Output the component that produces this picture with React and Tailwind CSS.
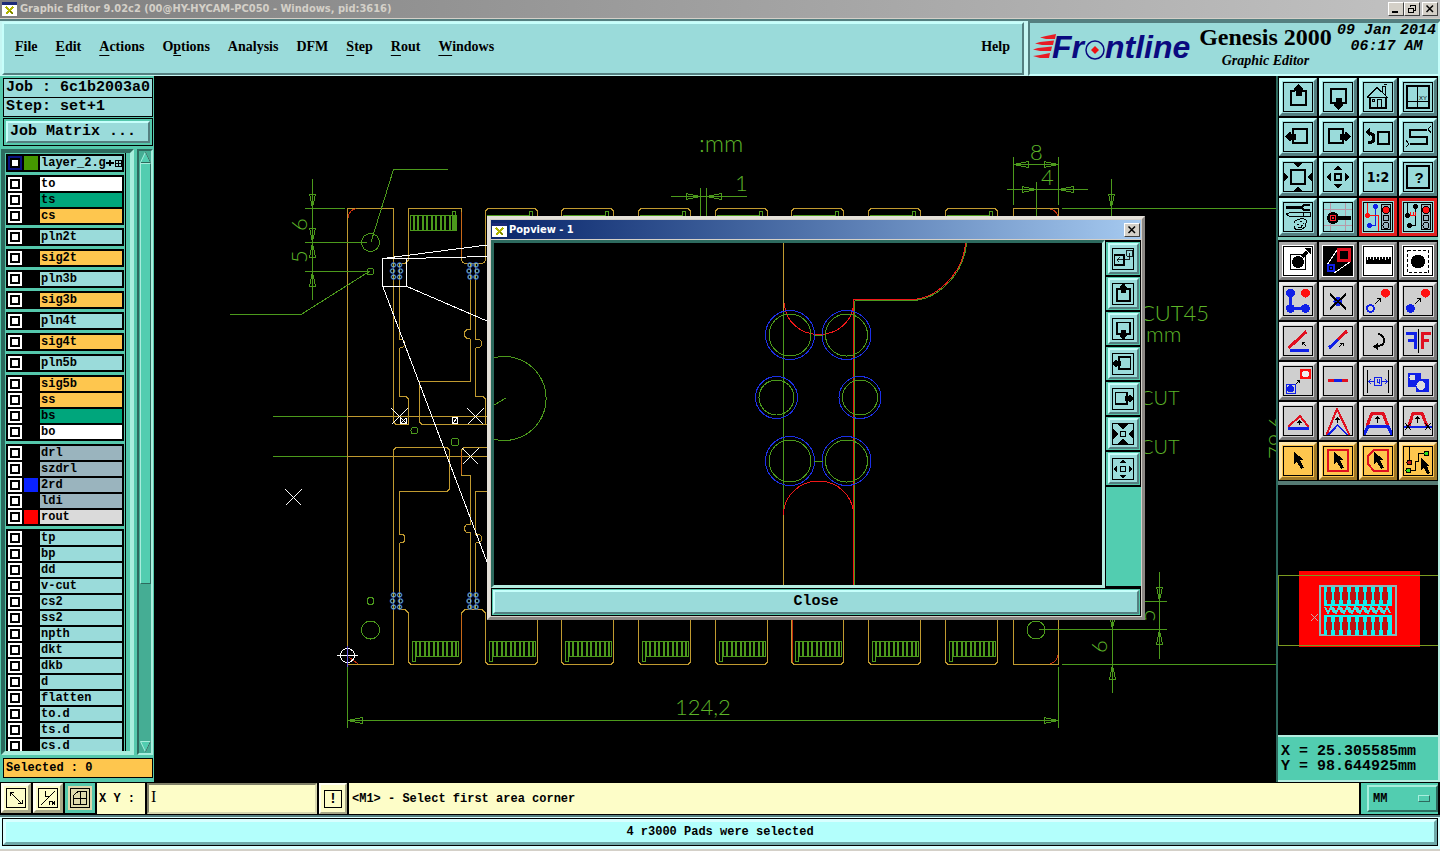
import { useState } from 'react';

const RAISED = 'border-t-[#c6fffb] border-l-[#c6fffb] border-r-[#547f80] border-b-[#547f80]';
const TEAL_RAISED = 'border-t-[#a8eedd] border-l-[#a8eedd] border-r-[#2d6a5e] border-b-[#2d6a5e]';
const MONO = "font-['Liberation_Mono',monospace] font-bold";
const TITLE = "font-['DejaVu_Sans_Condensed','DejaVu_Sans',sans-serif] font-bold";

const GREEN = '#4c9a1c';
const GOLD = '#c09a30';

/* ---------- data ---------- */

const MENUS = [
  ['', 'F', 'ile'],
  ['', 'E', 'dit'],
  ['', 'A', 'ctions'],
  ['O', 'p', 'tions'],
  ['Analysis', '', ''],
  ['DFM', '', ''],
  ['', 'S', 'tep'],
  ['', 'R', 'out'],
  ['', 'W', 'indows'],
];

const BLUE_ROW = 'bg-[#9adbda]';
const WHITE_ROW = 'bg-white';
const GREEN_ROW = 'bg-[#00a67c]';
const ORANGE_ROW = 'bg-[#fec64e]';
const SLATE_ROW = 'bg-[#9ab4be]';

const LAYER_GROUPS = [
  [['layer_2.g', BLUE_ROW, 'bg-[#459800]']],
  [['to', WHITE_ROW], ['ts', GREEN_ROW], ['cs', ORANGE_ROW]],
  [['pln2t', BLUE_ROW]],
  [['sig2t', ORANGE_ROW]],
  [['pln3b', BLUE_ROW]],
  [['sig3b', ORANGE_ROW]],
  [['pln4t', BLUE_ROW]],
  [['sig4t', ORANGE_ROW]],
  [['pln5b', BLUE_ROW]],
  [['sig5b', ORANGE_ROW], ['ss', ORANGE_ROW], ['bs', GREEN_ROW], ['bo', WHITE_ROW]],
  [
    ['drl', SLATE_ROW],
    ['szdrl', SLATE_ROW],
    ['2rd', SLATE_ROW, 'bg-[#0a22ff]'],
    ['ldi', SLATE_ROW],
    ['rout', 'bg-[#dadada]', 'bg-[#ff0000]'],
  ],
  ['tp', 'bp', 'dd', 'v-cut', 'cs2', 'ss2', 'npth', 'dkt', 'dkb', 'd', 'flatten', 'to.d', 'ts.d', 'cs.d'].map((n) => [n, BLUE_ROW]),
];

/* ---------- icons (32 x 32 grid) ---------- */

const thin = { fill: 'none', stroke: '#000', strokeWidth: 1 };
const thick = { fill: 'none', stroke: '#000', strokeWidth: 2 };
const red = { fill: 'none', stroke: '#e01020', strokeWidth: 2 };
const blue = { fill: 'none', stroke: '#1020e8', strokeWidth: 2 };

const CURSOR = 'M12 7 L12 19 L15 17 L19 24 L21.500 22.500 L18 15.500 L21.500 14.500 Z';

const ICONS = {
  panUp: (
    <>
      <path d="M13 10 H9 V24 H24 V10 H20" {...thick} />
      <path d="M16.500 3 L21 8 V10 H19.500 V15 H13.500 V10 H12 V8 Z" />
    </>
  ),
  panDown: (
    <>
      <rect x="9" y="8" width="15" height="14" {...thick} />
      <path d="M16.500 29 L21 24 V22.500 H19.500 V17 H13.500 V22.500 H12 V24 Z" />
    </>
  ),
  panLeft: (
    <>
      <rect x="11" y="8" width="14" height="14" {...thick} />
      <path d="M3 15.500 L7.500 11 H9 V12.500 H14 V18.500 H9 V20 H7.500 Z" />
    </>
  ),
  panRight: (
    <>
      <rect x="7" y="8" width="14" height="14" {...thick} />
      <path d="M29 15.500 L24.500 11 H23 V12.500 H18 V18.500 H23 V20 H24.500 Z" />
    </>
  ),
  home: (
    <>
      <path d="M5 16.500 L15 6.500 L25.500 16.500 H5" {...thin} />
      <path d="M8 17 V27 H23.500 V17" {...thick} />
      <rect x="15.500" y="18.500" width="4" height="8" {...thin} />
      <rect x="10.500" y="18.500" width="2" height="2" {...thin} />
      <path d="M20.500 11 V5.500 H23.500 V14 M22 4 q1 -1 3 -1" {...thin} />
    </>
  ),
  grid: (
    <>
      <rect x="5" y="5" width="22" height="22" {...thick} />
      <path d="M15.500 5 V27 M5 20.500 H27" {...thin} />
      <text x="17" y="19" fontSize="6" fontFamily="Liberation Sans, sans-serif">XY</text>
    </>
  ),
  undo: (
    <>
      <rect x="16" y="11" width="11" height="12" {...thick} />
      <path d="M6 12 Q12 12 12 17 Q12 22 6 22" fill="none" stroke="#000" strokeWidth="3" />
      <path d="M3 11 L8 6 V16 Z" />
    </>
  ),
  serpentine: (
    <>
      <path d="M25 9 H8 V15.500 H25 V23 H8" {...thick} />
      <path d="M29 5 L26 8 L29 12 M4 19 L7 23 L4 26" {...thin} />
    </>
  ),
  zoomIn: (
    <>
      <rect x="9" y="9" width="14" height="14" {...thick} />
      <path d="M11 2 H21 L16 6 Z M11 30 H21 L16 26 Z M2 11 V21 L6.500 16 Z M30 11 V21 L25.500 16 Z" />
    </>
  ),
  zoomOut: (
    <>
      <rect x="13" y="13" width="6" height="6" {...thick} />
      <path d="M11 9 H21 L16 5 Z M11 23 H21 L16 27 Z M9 11 V21 L4.500 16 Z M23 11 V21 L27.500 16 Z" />
    </>
  ),
  squeeze: (
    <>
      <rect x="13" y="13" width="6" height="6" {...thick} />
      <path d="M9 3 H23 L16 11 Z M9 29 H23 L16 21 Z M3 9 V23 L10 16 Z M29 9 V23 L22 16 Z" />
    </>
  ),
  ratio: (
    <text x="16" y="21" textAnchor="middle" fontSize="14" fontWeight="700" fontFamily="DejaVu Sans Condensed, sans-serif">1:2</text>
  ),
  help: (
    <>
      <rect x="5" y="5" width="22" height="22" {...thick} />
      <text x="17" y="22" textAnchor="middle" fontSize="15" fontWeight="700" fontFamily="Liberation Sans, sans-serif">?</text>
    </>
  ),
  tools: (
    <>
      <path d="M4 6.500 H20" stroke="#000" strokeWidth="3" />
      <path d="M28 4 H22 L19 6.500 L22 9 H28" {...thick} />
      <path d="M4 13 L8 11.500 H28 V15.500 H8 Z M21 11.500 V15.500" {...thin} />
      <path d="M12 25 Q11 19 18 18 Q24 17 25 21 Q23 22 24 25 Q20 29 15 29 Q12 28 12 25 Z M15 23 h2 M18 20.500 h2 M21 22 h1 M16 26 h3 v-2 h2" {...thin} />
    </>
  ),
  probe: (
    <>
      <path d="M2 8.500 H30 M2 24.500 H30 M8.500 2 V30 M23.500 2 V30" stroke="#b79aa8" />
      <circle cx="11" cy="17" r="6" />
      <path d="M15 17 H29" stroke="#000" strokeWidth="4" />
      <rect x="8.500" y="14.500" width="5" height="5" fill="none" stroke="#ff2030" />
      <rect x="10.500" y="16.500" width="1" height="1" fill="none" stroke="#ff2030" />
    </>
  ),
  netOn: (
    <>
      <path d="M13.500 5 V24.500 H8" stroke="#1020e8" fill="none" />
      <path d="M5.500 2 V14.500 H16.500 V30" stroke="#ff1010" fill="none" />
      <circle cx="13.500" cy="5.500" r="2.500" fill="#1020e8" />
      <circle cx="7.500" cy="24.500" r="2.500" fill="#1020e8" />
      <circle cx="5.500" cy="14.500" r="2.500" fill="#ff1010" />
      <rect x="19.500" y="3.500" width="9" height="25" fill="#9ab4be" stroke="#000" />
      <circle cx="24" cy="9" r="3.500" fill="#ff1010" stroke="#000" />
      <circle cx="24" cy="17" r="3" {...thin} />
      <circle cx="24" cy="24.500" r="3" {...thin} />
    </>
  ),
  netOff: (
    <>
      <path d="M13.500 5 V24.500 H8 M5.500 2 V14.500" {...thin} />
      <circle cx="13.500" cy="5.500" r="2.500" />
      <circle cx="7.500" cy="24.500" r="2.500" />
      <circle cx="5.500" cy="14.500" r="2.500" />
      <path d="M8 14.500 H14 M8.500 11 V14 M11.500 11 V14 M13.500 11 V14" stroke="#ff1010" fill="none" />
      <rect x="19.500" y="3.500" width="9" height="25" fill="#9ab4be" stroke="#000" />
      <circle cx="24" cy="9" r="3.500" fill="#ff1010" stroke="#000" />
      <circle cx="24" cy="17" r="3" {...thin} />
      <circle cx="24" cy="24.500" r="3" {...thin} />
    </>
  ),
  selectPad: (
    <>
      <rect x="8.500" y="9.500" width="15" height="15" {...thin} />
      <circle cx="16" cy="17" r="6" />
      <path d="M20 12 L25 7" stroke="#000" strokeWidth="3" />
      <path d="M22 3 H29 V10 Z" />
    </>
  ),
  selectPair: (
    <>
      <rect x="2" y="2" width="28" height="28" />
      <path d="M5 20 L15 5 M12 28 L28 17" stroke="#fff" />
      <rect x="16" y="4" width="11" height="11" {...red} strokeWidth="3" />
      <rect x="6" y="20" width="6" height="6" {...blue} />
      <rect x="8" y="22" width="2" height="2" fill="#1020e8" />
    </>
  ),
  ruler: (
    <>
      <rect x="4" y="12" width="25" height="7" />
      <path d="M5.500 11 V15 M8.500 11 V14 M11.500 11 V15 M14.500 11 V14 M17.500 11 V15 M20.500 11 V14 M23.500 11 V15 M26.500 11 V14" stroke="#fff" />
    </>
  ),
  region: (
    <>
      <rect x="5.500" y="5.500" width="21" height="22" {...thin} strokeDasharray="3 2" />
      <circle cx="16" cy="16.500" r="7" />
    </>
  ),
  net: (
    <>
      <path d="M8.500 8 V23.500 H23.500" fill="none" stroke="#1020e8" strokeWidth="3" />
      <circle cx="8.500" cy="8" r="4.500" fill="#1020e8" />
      <circle cx="8.500" cy="23.500" r="4.500" fill="#1020e8" />
      <circle cx="23.500" cy="23.500" r="4.500" fill="#1020e8" />
      <circle cx="23.500" cy="8" r="4.500" fill="#ff1010" />
    </>
  ),
  erase: (
    <>
      <circle cx="16" cy="16.500" r="4.500" fill="#1020e8" />
      <path d="M8 9 L24 24 M24 9 L8 24" {...thick} />
    </>
  ),
  copy: (
    <>
      <circle cx="8.500" cy="23.500" r="3.500" {...blue} />
      <circle cx="23.500" cy="8" r="4.500" fill="#ff1010" />
      <path d="M13 19 L18 14 M15 13.500 H18.500 V17" {...thin} />
    </>
  ),
  move: (
    <>
      <circle cx="8.500" cy="23.500" r="4.500" fill="#1020e8" />
      <circle cx="23.500" cy="8" r="4.500" fill="#ff1010" />
      <path d="M13 19 L18 14 M15 13.500 H18.500 V17" {...thin} />
    </>
  ),
  angle: (
    <>
      <path d="M6.500 23 L24.500 6.500" {...red} strokeWidth="3" />
      <path d="M8 25.500 H27" {...blue} strokeWidth="3" />
      <path d="M24 21 L20 17 M20.500 20 V17.500 H23" {...thin} />
    </>
  ),
  stretch: (
    <>
      <path d="M7 23 L16 14.500" {...blue} strokeWidth="3" />
      <path d="M16 14.500 L25 6" {...red} strokeWidth="3" />
      <path d="M17 22 L21 18 M18 18.500 H21.500 V21" {...thin} />
    </>
  ),
  rotate: (
    <>
      <path d="M16 9 Q22 10 22 16 Q22 21 13 21.500" {...thick} />
      <path d="M16 18 L11 21.500 L16 25 Z" />
    </>
  ),
  mirror: (
    <>
      <path d="M13 24 V8 H4 M13 15.500 H6" {...blue} strokeWidth="3" />
      <path d="M16.500 4 V28" {...thin} />
      <path d="M20 24 V8 H29 M20 15.500 H27" {...red} strokeWidth="3" />
    </>
  ),
  convert: (
    <>
      <rect x="4" y="19" width="9" height="9" fill="none" stroke="#1020e8" />
      <circle cx="8.500" cy="23.500" r="3.500" fill="#1020e8" />
      <rect x="18" y="4" width="11" height="10" fill="#ff1010" />
      <circle cx="23.500" cy="9" r="3.500" fill="#eee" />
      <path d="M14 19 L17 16 M14.500 15.500 H17.500 V18" {...thin} />
    </>
  ),
  segment: (
    <>
      <path d="M6 15.500 H26" {...red} strokeWidth="3" />
      <path d="M12 15.500 H20" {...blue} strokeWidth="3" />
    </>
  ),
  spacing: (
    <>
      <path d="M5.500 5 V28 M26.500 5 V28" {...thin} />
      <path d="M6 16.500 H12 M20 16.500 H26 M9 14 L6.500 16.500 L9 19 M23 14 L25.500 16.500 L23 19 M12.500 12.500 H19.500 V20.500 H12.500 Z M15 14 V17 H18 M17.500 14 V19" fill="none" stroke="#1020e8" />
    </>
  ),
  shapes: (
    <>
      <path d="M6 8 H19 V14 H27 V27 H14 V22 H6 Z" fill="#1020e8" />
      <circle cx="10.500" cy="12.500" r="3" fill="#ddd" />
      <circle cx="19" cy="20.500" r="4.500" fill="#ddd" />
    </>
  ),
  triangle: (
    <>
      <path d="M6 22 L18 11 L26.500 22" {...red} />
      <path d="M6 23.500 H27" {...blue} strokeWidth="3" />
      <path d="M17.500 20 V16 M15.500 18 L17.500 16 L19.500 18" {...thin} />
    </>
  ),
  peak: (
    <>
      <path d="M4.500 30 L15 4 L27.500 30" {...red} />
      <path d="M6 30 L15.500 20 L25.500 30" {...blue} />
      <path d="M15.500 18 V13 M13.500 15 L15.500 13 L17.500 15" {...thin} />
    </>
  ),
  trapeze: (
    <>
      <path d="M5 21 L10 8 H21 L26 21" {...red} strokeWidth="3" />
      <path d="M2 30 L6 21 H26 L30 30" {...blue} strokeWidth="3" />
      <path d="M15.500 18 V12 M13.500 14 L15.500 12 L17.500 14" {...thin} />
    </>
  ),
  trapezeCut: (
    <>
      <path d="M7 21 L11 8 H20 L25 21" {...red} strokeWidth="3" />
      <path d="M2 21.500 H30" {...blue} />
      <path d="M3 18 L9 25 M9 18 L3 25 M23 18 L29 25 M29 18 L23 25 M15.500 18 V12 M13.500 14 L15.500 12 L17.500 14" {...thin} />
    </>
  ),
  pick: <path d={CURSOR} />,
  pickFrame: (
    <>
      <rect x="6" y="5" width="20" height="21" {...red} />
      <path d={CURSOR} />
    </>
  ),
  pickPoly: (
    <>
      <path d="M12 5 H26 V26 H12 L6 19 V11 Z" {...red} />
      <path d={CURSOR} />
    </>
  ),
  pickNet: (
    <>
      <path d="M7.500 2 V16 M7 25.500 H13.500 V16.500 H16.500 V8.500 H24" {...thin} />
      <circle cx="7.500" cy="17.500" r="2.500" fill="#c01818" stroke="#000" />
      <circle cx="6.500" cy="25.500" r="2.500" fill="#30e020" stroke="#000" />
      <circle cx="24.500" cy="8.500" r="2.500" fill="#30e020" stroke="#000" />
      <path d="M19 13 V25 L22 23 L25 29 L28 28 L25 21 H28 Z" />
    </>
  ),
  popOut: (
    <>
      <rect x="6" y="11" width="11" height="12" {...thick} />
      <path d="M9 17 H23.500 V13 M9 17 l3 -3 M9 17 l3 3 M20.500 5.500 H27.500 V12.500 H20.500 Z M23.500 8.500 V13" {...thin} />
    </>
  ),
};

const VIEW_TOOLS = [
  'panUp', 'panDown', 'home', 'grid',
  'panLeft', 'panRight', 'undo', 'serpentine',
  'zoomIn', 'zoomOut', 'ratio', 'help',
  'tools', 'probe', 'netOn', 'netOff',
];
const MODE_TOOLS = ['selectPad', 'selectPair', 'ruler', 'region'];
const EDIT_TOOLS = [
  'net', 'erase', 'copy', 'move',
  'angle', 'stretch', 'rotate', 'mirror',
  'convert', 'segment', 'spacing', 'shapes',
  'triangle', 'peak', 'trapeze', 'trapezeCut',
];
const PICK_TOOLS = ['pick', 'pickFrame', 'pickPoly', 'pickNet'];
const POP_TOOLS = ['popOut', 'panUp', 'panDown', 'panLeft', 'panRight', 'squeeze', 'zoomOut'];

function ToolButton({ name, className }) {
  return (
    <button type="button" aria-label={name} className={`flex size-[38px] items-center justify-center border-[3px] ${className}`}>
      <svg viewBox="2 2 28 28" className="size-[30px] border border-black" shapeRendering="crispEdges">
        {ICONS[name]}
      </svg>
    </button>
  );
}

/* ---------- title bars ---------- */

function XIcon() {
  return (
    <svg viewBox="0 0 15 14" className="h-[14px] w-[15px] shrink-0" shapeRendering="crispEdges">
      <rect width="15" height="14" fill="#1c2a78" />
      <rect x="0" y="3" width="15" height="11" fill="#fff" />
      <path d="M4 5 L11 12 M11 5 L4 12" stroke="#b0b400" strokeWidth="2" />
      <path d="M8 9 L11 12" stroke="#5a6a10" />
    </svg>
  );
}

function WinButton({ label, children }) {
  return (
    <button
      type="button"
      aria-label={label}
      className="flex h-[14px] w-4 items-center justify-center border border-t-white border-l-white border-r-[#404040] border-b-[#404040] bg-[#d4d0c8]"
    >
      <svg viewBox="0 0 12 10" className="h-[10px] w-3" fill="none" stroke="#000" shapeRendering="crispEdges">
        {children}
      </svg>
    </button>
  );
}

const CLOSE_GLYPH = <path d="M2.500 1.500 L9 8 M9 1.500 L2.500 8" strokeWidth="1.500" shapeRendering="auto" />;

function TitleBar() {
  return (
    <div className="flex h-[19px] shrink-0 items-center justify-between border-b border-[#d4d0c8] bg-linear-to-r from-[#7f7f7f] to-[#c2c2c2] px-[2px]">
      <div className="flex items-center gap-[3px]">
        <XIcon />
        <span className={`${TITLE} text-[11px] leading-4 text-[#d4d0c8]`}>
          Graphic Editor 9.02c2 (00@HY-HYCAM-PC050 - Windows, pid:3616)
        </span>
      </div>
      <div className="flex">
        <WinButton label="Minimize">
          <path d="M2 8 H8" strokeWidth="2" />
        </WinButton>
        <WinButton label="Restore">
          <path d="M4.500 3 V1.500 H9.500 V6.500 H8 M4 1 H10 M2.500 4.500 H7.500 V8.500 H2.500 Z M2 4 H8" />
        </WinButton>
        <span className="w-[2px]" />
        <WinButton label="Close">{CLOSE_GLYPH}</WinButton>
      </div>
    </div>
  );
}

/* ---------- header ---------- */

function Logo() {
  return (
    <svg viewBox="0 -4 162 44" className="h-[44px] w-[162px] shrink-0" role="img" aria-label="Frontline">
      <g fill="#e81c24">
        <path d="M14 4 L24 2 L23 7 H14 L8 5.500 Z" />
        <path d="M8 10 L22 8.500 L21 13 H10 L3 11.500 Z" />
        <path d="M6 16 L20 14.500 L19 19 H8 L1 17.500 Z" />
        <path d="M8 23 L18 21 L17 26 H8 L1 24 Z" />
      </g>
      <g fill="#0a0a80" fontFamily="Liberation Sans, sans-serif" fontWeight="700" fontStyle="italic" fontSize="32">
        <text x="20" y="26">Fr</text>
        <text x="73" y="26">ntline</text>
      </g>
      <circle cx="63" cy="18" r="9" fill="none" stroke="#0a0a80" strokeWidth="1.500" />
      <path d="M63 14 L67 18 L63 22 L59 18 Z" fill="#f01010" />
    </svg>
  );
}

function Header() {
  return (
    <header className="flex h-[57px] shrink-0 gap-1 border-t-2 border-[#547f80] bg-[#c6f6f3] pl-[2px] font-['Liberation_Serif',serif] font-bold text-black">
      <nav className={`my-[1px] flex flex-1 items-center gap-[18px] border-2 bg-[#9adbda] pr-3 pb-1 pl-[11px] text-[14px] leading-5 ${RAISED}`}>
        {MENUS.map(([pre, key, post]) => (
          <button key={pre + key + post} type="button" className="whitespace-nowrap">
            {pre}
            {key && <span className="underline underline-offset-4">{key}</span>}
            {post}
          </button>
        ))}
        <button type="button" className="ml-auto">Help</button>
      </nav>
      <div className="flex w-[412px] shrink-0 items-start border-2 border-t-[#547f80] border-l-[#547f80] border-r-[#c6fffb] border-b-[#c6fffb] bg-[#9adbda] pr-[2px] pl-[2px]">
        <div className="pt-[5px]">
          <Logo />
        </div>
        <div className="flex flex-1 flex-col items-center">
          <h1 className="text-[24px] leading-7 whitespace-nowrap">Genesis 2000</h1>
          <p className="text-[14px] leading-5 italic">Graphic Editor</p>
        </div>
        <p className={`${MONO} shrink-0 text-center text-[15px] leading-4 italic`}>
          09 Jan 2014
          <br />
          06:17 AM
        </p>
      </div>
    </header>
  );
}

/* ---------- left column ---------- */

function LayerRow({ name, color, swatch, active }) {
  const id = `layer-${name}`;
  return (
    <div className="flex h-4 items-center gap-[2px] px-[1px]">
      <input
        id={id}
        type="checkbox"
        className={`size-[14px] shrink-0 appearance-none border-2 bg-white shadow-[inset_0_0_0_2px_#000] ${active ? 'border-[#0a1280]' : 'border-white'}`}
      />
      <span className={`size-[14px] shrink-0 ${swatch || 'bg-black'}`} />
      <label htmlFor={id} className={`flex h-[14px] flex-1 items-center pl-[1px] ${color}`}>
        {name}
        {active && (
          <svg viewBox="0 0 16 8" className="h-2 w-4" shapeRendering="crispEdges">
            <path d="M0 3 H3 V1 H5 V3 H8 V5 H5 V7 H3 V5 H0 Z" />
            <rect x="9.500" y="1.500" width="6" height="6" fill="none" stroke="#000" />
            <path d="M12.500 1 V7 M9 4.500 H16" stroke="#000" />
          </svg>
        )}
      </label>
    </div>
  );
}

function Sidebar() {
  return (
    <aside className={`flex w-[155px] shrink-0 flex-col border-r border-black bg-[#55c8ac] pt-[2px] pr-[1px] pb-1 pl-[3px] ${MONO}`}>
      <p className="h-5 shrink-0 border border-black bg-[#9adbda] pl-[2px] text-[15px] leading-[18px] whitespace-nowrap">Job : 6c1b2003a0</p>
      <p className="h-[19px] shrink-0 border border-t-0 border-black bg-[#9adbda] pl-[2px] text-[15px] leading-[18px]">Step: set+1</p>
      <div className="mt-[1px] flex h-[28px] shrink-0 border border-black p-[2px]">
        <button type="button" className={`w-full border-2 bg-[#9adbda] pl-[2px] text-left text-[15px] leading-4 ${RAISED}`}>
          Job Matrix ...
        </button>
      </div>
      <div className="-ml-[2px] mt-[3px] flex min-h-0 flex-1 justify-between">
        <div className="flex w-[133px] overflow-hidden border-4 border-t-[#2d6a5e] border-l-[#2d6a5e] border-r-[#a8eedd] border-b-[#a8eedd] pr-[2px]">
          <div className="flex h-full w-[121px] flex-col gap-[3px] overflow-hidden border-r border-black pt-[1px] pl-[1px] text-[12px] leading-[14px]">
            {LAYER_GROUPS.map((group, i) => (
              <div key={group[0][0]} className="w-[118px] shrink-0 bg-black p-[1px]">
                {group.map(([name, color, swatch]) => (
                  <LayerRow key={name} name={name} color={color} swatch={swatch} active={i === 0} />
                ))}
              </div>
            ))}
          </div>
        </div>
        <div className="flex w-4 flex-col items-center border-2 border-t-[#2d6a5e] border-l-[#2d6a5e] border-r-[#a8eedd] border-b-[#a8eedd] bg-[#45ad94]">
          <svg viewBox="0 0 11 12" className="h-3 w-[11px] shrink-0">
            <path d="M5.500 1 L10.500 11.500 H0.500 Z" fill="#52cdb0" stroke="#a8eedd" />
            <path d="M5.500 1 L10.500 11.500 H1" fill="none" stroke="#2d6a5e" />
          </svg>
          <span className={`mb-[6px] w-[11px] flex-[421] border bg-[#52cdb0] ${TEAL_RAISED}`} />
          <span className="flex-[152]" />
          <svg viewBox="0 0 11 12" className="h-3 w-[11px] shrink-0">
            <path d="M0.500 0.500 H10.500 L5.500 11 Z" fill="#52cdb0" stroke="#a8eedd" />
            <path d="M10.500 0.500 L5.500 11" fill="none" stroke="#2d6a5e" />
          </svg>
        </div>
      </div>
      <p className="mt-[3px] h-5 shrink-0 border border-black bg-[#fec64e] pl-[2px] text-[12px] leading-[18px]">Selected : 0</p>
    </aside>
  );
}

/* ---------- board canvas ---------- */

const TABS = [408, 485, 561, 638, 715, 791, 868, 945];

// arrow head with its tip at x,y
function Arrow({ x, y, dir }) {
  const turn = { right: 0, down: 90, left: 180, up: 270 }[dir];
  return <path d="M0 0 L-5 -1 L-14 -3 V3 L-5 1 Z" transform={`translate(${x} ${y}) rotate(${turn})`} />;
}

function Cross({ x, y }) {
  return <path d={`M${x - 8} ${y - 8} l16 16 M${x + 8} ${y - 8} l-16 16`} />;
}

function PadCluster({ x, y }) {
  return (
    <g fill="none" shapeRendering="auto">
      {[[-3, -6], [3, -6], [-4, 0], [4, 0], [-3, 6], [3, 6]].map(([dx, dy]) => (
        <g key={`${dx},${dy}`}>
          <circle cx={x + dx} cy={y + dy} r="2.600" stroke="#1838c0" strokeWidth="0.800" />
          <circle cx={x + dx} cy={y + dy} r="1.900" stroke="#7cc8c8" strokeWidth="0.900" />
        </g>
      ))}
    </g>
  );
}

function Fingers({ x, y }) {
  return (
    <g>
      <rect x={x + 0.5} y={y + 0.5} width="46" height="15" fill="none" stroke={GREEN} />
      {[3, 7, 12, 16, 21, 25, 30, 34, 39, 43].map((dx) => (
        <rect key={dx} x={x + dx} y={y} width="2" height="16" fill={GREEN} />
      ))}
    </g>
  );
}

function BoardCanvas() {
  return (
    <svg viewBox="155 76 1121 706" preserveAspectRatio="xMinYMin meet" className="block h-full w-full" shapeRendering="crispEdges">
      {/* board outline */}
      <g fill="none" stroke={GOLD}>
        <path d="M347.500 664.500 V208.500 H393.500 V422 L396 424.500 H408.500 V399 L406 396.500 H399.500 V348 Q404.500 348 404.500 343.500 Q404.500 339 399.500 339 V263.500 H405 L408.500 260 V208.500 H461.500 V258 Q461.500 263.500 466 263.500 H481 Q485.500 263.500 485.500 258 V216" />
        <path d="M470.500 264 V329 Q464.500 329 464.500 334 Q464.500 339 470.500 339 V381.500 H419.500 V422 L422 424.500 H487" />
        <path d="M475.500 264 V339 Q482 339 482 343.500 Q482 348 475.500 348 V396.500 H483 L485.500 399 V424 M347 416.500 H487 M347 456.500 H487" />
        <path d="M393.500 664.500 V450 L396 447.500 H447 L449.500 450 V489 L447 491.500 H399.500 V534 Q405 534 405 538.500 Q405 543 399.500 543 V609.500 H405 L408.500 613 V662 L411 664.500 H459 L461.500 662 V613 L465 609.500 H482 L485.500 613" />
        <path d="M487 447.500 H464 L461.500 450 V475.500 H470.500 V524 Q464.500 524 464.500 528.500 Q464.500 533 470.500 533 V609 M487 491.500 H475.500 V534 Q482 534 482 538.500 Q482 543 475.500 543 V609 M347 664.500 H393.500" />
        {TABS.slice(1).map((x) => (
          <g key={x}>
            <path d={`M${x + 0.5} 220 V211 L${x + 3} 208.500 H${x + 50} L${x + 52.5} 211 V220`} />
            <path d={`M${x + 0.5} 612 V662 L${x + 3} 664.500 H${x + 50} L${x + 52.5} 662 V612`} />
          </g>
        ))}
        <path d="M1013.500 220 V208.500 H1058.500 V220 M1013.500 612 V664.500 H1058.500 V612" />
      </g>
      <g fill="none" stroke="#c83010">
        <path d="M348 218 Q349 210 356 208.500 M1050 209 Q1057 210 1058 218 M1050 664 Q1057 662 1058 655 M349 657 L358 664 M792.500 620 V662" />
      </g>
      <path d="M461.500 212 V258 M461.500 452 V474 M461.500 615 V660" stroke="#c86818" />

      {/* contact fingers */}
      <rect x="452.500" y="211.500" width="3" height="19" fill="none" stroke={GREEN} />
      <Fingers x={410} y={215} />
      {TABS.map((x) => (
        <g key={x}>
          <Fingers x={x + 4} y={641} />
          <rect x={x + 4.5} y="641.500" width="3" height="20" fill="#000" stroke={GREEN} />
          {x > 408 && <path d={`M${x + 2} 215.500 H${x + 44.500} V211.500 H${x + 47.500} V218`} fill="none" stroke={GREEN} />}
        </g>
      ))}

      {/* dimensions */}
      <g fill="none" stroke={GREEN}>
        <path d="M312.500 179 V300 M305 208.500 H345 M305 242.500 H367 M305 271.500 H370 M371 242 L393.500 169.500 H448 M230 314.500 H301 L370 271 M273 416.500 H347 M273 456.500 H347" />
        <path d="M347.500 667 V728 M1058.500 667 V728 M348 720.500 H1058 M671 196.500 H747 M700.500 188 V216 M706.500 188 V216" />
        <path d="M1013.500 157 V205 M1058.500 157 V205 M1013 164.500 H1058 M1007 189.500 H1088 M1036.500 182 V216 M1062 208.500 H1276 M1111.500 179 V216" />
        <path d="M1062 664.500 H1276 M1112.500 620 V693 M1159.500 572 V659 M1145 601.500 H1167 M1039 629.500 H1167" />
        <circle cx="370.500" cy="242.500" r="9" />
        <circle cx="370.500" cy="271.500" r="3.500" />
        <circle cx="414.500" cy="430.500" r="3.500" />
        <circle cx="455" cy="442" r="4" />
        <circle cx="370.500" cy="601" r="3.500" />
        <circle cx="370.500" cy="630" r="9" />
        <circle cx="1036" cy="630" r="9" />
        <Arrow x={312.5} y={208} dir="down" />
        <Arrow x={312.5} y={242} dir="down" />
        <Arrow x={312.5} y={243} dir="up" />
        <Arrow x={312.5} y={272} dir="up" />
        <Arrow x={348} y={720.5} dir="left" />
        <Arrow x={1058} y={720.5} dir="right" />
        <Arrow x={700} y={196.5} dir="right" />
        <Arrow x={707} y={196.5} dir="left" />
        <Arrow x={1014} y={164.5} dir="left" />
        <Arrow x={1058} y={164.5} dir="right" />
        <Arrow x={1036} y={189.5} dir="right" />
        <Arrow x={1059} y={189.5} dir="left" />
        <Arrow x={1111.5} y={208} dir="down" />
        <Arrow x={1112.5} y={629} dir="down" />
        <Arrow x={1112.5} y={665} dir="up" />
        <Arrow x={1159.5} y={601} dir="down" />
        <Arrow x={1159.5} y={630} dir="up" />
      </g>
      <g fill="#5cb428" fontFamily="Lato, sans-serif" fontWeight="300" fontSize="22">
        <text x="699" y="152" fontSize="24">:mm</text>
        <text x="735" y="191">1</text>
        <text x="1030" y="160">8</text>
        <text x="1041" y="185">4</text>
        <text x="675" y="715">124,2</text>
        <text x="1140" y="321">CUT45</text>
        <text x="1146" y="342">mm</text>
        <text x="1140" y="405" fontSize="20">CUT</text>
        <text x="1140" y="454" fontSize="20">CUT</text>
        <text transform="translate(307 231) rotate(-90)">6</text>
        <text transform="translate(307 263) rotate(-90)">5</text>
        <text transform="translate(1107 653) rotate(-90)">6</text>
        <text transform="translate(1155 622) rotate(-90)">5</text>
        <text transform="translate(1284 459) rotate(-90)">79,6</text>
      </g>

      <PadCluster x={396.5} y={271} />
      <PadCluster x={473} y={271} />
      <PadCluster x={396.5} y={601} />
      <PadCluster x={473} y={601} />

      {/* popview callout and snap marks */}
      <g fill="none" stroke="#fff">
        <path d="M382.500 258.500 H406.500 V286.500 H382.500 Z M383 258.500 L487 245 M406 258.500 L487 256.500 M407 286.500 L487 321 M383 287 L487 562" />
        <Cross x={399.5} y={416.5} />
        <Cross x={475.5} y={416.5} />
        <Cross x={470.5} y={456.5} />
        <Cross x={293.5} y={497.5} />
        <path d="M400.500 417.500 V423.500 H406.500 V417.500 M401 423 L406 418 M452.500 417.500 H457.500 V423.500 H452.500 Z M453 423 L457 418" />
        <circle cx="347.500" cy="655.500" r="7" />
        <path d="M337 655.500 H358" />
      </g>
      <path d="M347.500 646 V667" stroke="#6a5ae0" />
    </svg>
  );
}

/* ---------- popview window ---------- */

const PADS = [[790, 335, 24.5], [846.5, 335, 24.5], [776.5, 397.5, 21], [860, 397.5, 21], [790, 461, 24.5], [846.5, 461, 24.5]];

function Popview() {
  return (
    <section className="absolute top-[140px] left-[332px] flex h-[404px] w-[658px] flex-col border-[3px] border-t-[#e4e0d8] border-l-[#e4e0d8] border-r-[#8c8884] border-b-[#8c8884] bg-[#d4d0c8] p-[1px]">
      <div className="flex h-[19px] shrink-0 items-center justify-between bg-linear-to-r from-[#0a246a] to-[#a6caf0] px-[1px]">
        <div className="flex items-center gap-[2px]">
          <XIcon />
          <h2 className={`${TITLE} text-[11px] leading-4 text-white`}>Popview - 1</h2>
        </div>
        <WinButton label="Close popview">{CLOSE_GLYPH}</WinButton>
      </div>
      <div className="mt-[1px] flex min-h-0 flex-1 bg-[#55c8ac]">
        <div className="min-w-0 flex-1 border-[3px] border-t-[#2d6a5e] border-l-[#2d6a5e] border-r-[#b5ede0] border-b-[#b5ede0] bg-black">
          <svg viewBox="494 243 608 342" preserveAspectRatio="xMinYMin slice" className="block h-full w-full" fill="none" shapeRendering="crispEdges">
            <path d="M783.500 242 V312 M783.500 512 V585" stroke={GOLD} />
            <path d="M783.500 312 V512 M854.500 301 V585 M855 300.500 H912 C936 300 964 276 966.500 243" stroke={GREEN} />
            <path d="M853.500 585 V299.500 H912 C935 299 963 275 965.500 243" stroke="#f01818" />
            <path d="M784.500 303 A34.500 31.500 0 0 0 853.500 303 M783.500 515 A35 34 0 0 1 853.500 515" stroke="#f01818" />
            <g>
              {PADS.map(([x, y, r]) => (
                <g key={`${x},${y}`}>
                  <circle cx={x} cy={y} r={r} stroke="#1c30e8" />
                  <circle cx={x} cy={y} r={r - 3.5} stroke={GREEN} />
                </g>
              ))}
            </g>
            <path d="M814 335.500 H823 M814 461.500 H823 M493 358 A42 42 0 1 1 493 439 M494 405 L506 398" stroke={GREEN} />
          </svg>
        </div>
        <div className="flex w-9 flex-col border-l border-black bg-[#52cdb0]">
          {POP_TOOLS.map((name) => (
            <button
              key={name}
              type="button"
              aria-label={name}
              className="flex h-[35px] shrink-0 items-center justify-center border-t-2 border-r border-black bg-[#55c8ac]"
            >
              <span className={`flex size-[31px] items-center justify-center border-2 bg-[#9adbda] ${RAISED}`}>
                <svg viewBox="4 4 24 24" className="size-[22px] border border-black" shapeRendering="crispEdges">
                  {ICONS[name]}
                </svg>
              </span>
            </button>
          ))}
          <span className="flex-1 border-t-2 border-b-2 border-black" />
        </div>
      </div>
      <div className="flex h-[28px] shrink-0 border border-black bg-[#55c8ac] p-[1px]">
        <button type="button" className={`w-full border-2 bg-[#9adbda] text-[15px] leading-4 ${MONO} ${RAISED}`}>
          Close
        </button>
      </div>
    </section>
  );
}

/* ---------- right column ---------- */

function MiniMap() {
  const slots = [0, 1, 2, 3, 4, 5, 6, 7].map((i) => 1327 + i * 8);
  return (
    <svg viewBox="1278 485 160 250" preserveAspectRatio="xMinYMid meet" className="block h-full w-full" shapeRendering="crispEdges">
      <rect x="1299" y="571" width="121" height="76" fill="#ff0000" />
      <path d="M1438 575.500 H1278.500 V645.500 H1438" fill="none" stroke="#7a9a20" />
      <rect x="1320" y="586" width="76" height="49" fill="none" stroke="#8ab8b8" strokeWidth="2" />
      <rect x="1324" y="587" width="68" height="19" fill="#10f0f0" />
      <rect x="1324" y="615" width="68" height="20" fill="#10f0f0" />
      {slots.map((x) => (
        <g key={x} fill="#c01010">
          <path d={`M${x} 587 h4 v5 h1 v8 h-1 v4 h-4 v-4 h-1 v-8 h1 Z`} />
          <path d={`M${x} 617 h4 v5 h1 v8 h-1 v5 h-4 v-5 h-1 v-8 h1 Z`} />
          <path d={`M${x - 2} 607 l3 6 l3 -6 l3 6`} fill="none" stroke="#40e0e0" strokeWidth="2" />
        </g>
      ))}
      <path d="M1311 614 l7 7 M1318 614 l-7 7" stroke="#c8a8a8" />
    </svg>
  );
}

function ToolPanel() {
  return (
    <aside className="flex w-[164px] shrink-0 flex-col border-r-2 border-l-2 border-l-[#2d6a5e] border-r-[#b5ede0] bg-black">
      <div className="grid grid-cols-4 gap-[2px] border-b-[3px] border-[#7cc8b8] p-[1px] pt-[2px]">
        {VIEW_TOOLS.map((name) => (
          <ToolButton
            key={name}
            name={name}
            className={name.startsWith('net') ? 'border-[#e02020] bg-[#9adbda]' : `bg-[#9adbda] ${RAISED}`}
          />
        ))}
      </div>
      <div className="grid grid-cols-4 gap-[2px] border-b-4 border-[#557a74] p-[1px] pt-[2px]">
        {MODE_TOOLS.map((name) => (
          <ToolButton key={name} name={name} className="border-t-[#a8a8a8] border-l-[#a8a8a8] border-r-[#787878] border-b-[#787878] bg-white" />
        ))}
        {EDIT_TOOLS.map((name) => (
          <ToolButton key={name} name={name} className="border-t-[#ececec] border-l-[#ececec] border-r-[#787878] border-b-[#787878] bg-[#cfcfcf]" />
        ))}
        {PICK_TOOLS.map((name) => (
          <ToolButton key={name} name={name} className="border-t-[#ffe6a8] border-l-[#ffe6a8] border-r-[#a07a28] border-b-[#a07a28] bg-[#fec64e]" />
        ))}
      </div>
      <div className="min-h-0 flex-1">
        <MiniMap />
      </div>
      <div className={`h-[47px] shrink-0 border-y-2 border-t-[#b5ede0] border-b-[#b5ede0] bg-[#52cdb0] pt-[7px] pl-[3px] text-[15px] leading-[15px] whitespace-nowrap ${MONO}`}>
        <p>X = 25.305585mm</p>
        <p>Y = 98.644925mm</p>
      </div>
    </aside>
  );
}

/* ---------- bottom rows ---------- */

function SnapButton({ label, on, children }) {
  return (
    <button
      type="button"
      aria-label={label}
      className={`flex size-[30px] shrink-0 items-center justify-center border-[3px] ${
        on ? 'border-[#55c8ac] bg-[#ddd8ac]' : 'border-t-[#fffff0] border-l-[#fffff0] border-r-[#a8a888] border-b-[#a8a888] bg-[#fdfdc8]'
      }`}
    >
      <svg viewBox="0 0 20 20" className="size-5" fill="none" stroke="#000" shapeRendering="crispEdges">
        <rect x="0.500" y="0.500" width="19" height="19" />
        {children}
      </svg>
    </button>
  );
}

function CommandRow() {
  const [xy, setXy] = useState('');
  return (
    <div className={`flex h-[33px] shrink-0 gap-[2px] border-y border-black bg-black pr-[2px] pl-[1px] text-[12px] ${MONO}`}>
      <SnapButton label="Snap off">
        <path d="M4 4 L16 16 M4 8 V4.500 H8 M16 12 V15.500 H12" />
      </SnapButton>
      <SnapButton label="Snap to angle">
        <path d="M3 17 L17 3 M7.500 3 V8.500 H11 M11.500 16.500 V13.500 H14 L17 16.500 M14 16.500 L17 13.500" />
      </SnapButton>
      <SnapButton label="Snap to grid" on>
        <path d="M3 16.500 V8 L8 3.500 H16.500 V16.500 Z M10.500 3 V17 M3 10.500 H17" />
      </SnapButton>
      <label htmlFor="xy" className="flex w-12 shrink-0 items-center bg-[#fdfdc8] pl-[2px] text-[12px] whitespace-nowrap">X Y :</label>
      <input
        id="xy"
        value={xy}
        onChange={(e) => setXy(e.target.value)}
        placeholder="I"
        className="w-[170px] shrink-0 border-2 border-t-[#808068] border-l-[#808068] border-r-[#d8d8b0] border-b-[#d8d8b0] bg-[#fdfdc8] px-[2px] pb-1 font-['Liberation_Serif',serif] text-[16px] font-normal outline-none placeholder:text-black"
      />
      <button type="button" aria-label="Messages" className="flex w-7 shrink-0 items-center justify-center border-2 border-t-[#fffff0] border-l-[#fffff0] border-r-[#a8a888] border-b-[#a8a888] bg-[#fdfdc8]">
        <span className="flex size-[18px] items-center justify-center border border-black text-[14px] leading-4">!</span>
      </button>
      <p className="flex-1 bg-[#fdfdc8] pl-[3px] leading-8">&lt;M1&gt; - Select first area corner</p>
      <div className="relative w-[77px] shrink-0 bg-[#52cdb0] pt-[2px] pl-[6px]">
        <select aria-label="Units" className={`h-[27px] w-full appearance-none border-2 bg-[#52cdb0] pl-1 ${TEAL_RAISED}`}>
          <option>MM</option>
          <option>INCH</option>
        </select>
        <span className={`pointer-events-none absolute top-3 right-2 h-[7px] w-3 border bg-[#52cdb0] ${TEAL_RAISED}`} />
      </div>
    </div>
  );
}

function StatusRow() {
  return (
    <footer className="flex h-[36px] shrink-0 flex-col border-b-2 border-[#d4d0c8] bg-[#d8ffff]">
      <div className="flex-1 border-t-2 border-[#547f80] px-[2px] pt-[1px] pb-[3px]">
        <p className={`flex h-full items-center justify-center border border-black bg-[#b3fffc] text-[12px] ${MONO}`}>
          <span className="flex h-full w-full items-center justify-center border-[3px] border-t-[#d8ffff] border-l-[#d8ffff] border-r-[#6ea8a8] border-b-[#6ea8a8]">
            4 r3000 Pads were selected
          </span>
        </p>
      </div>
    </footer>
  );
}

export default function App() {
  return (
    <div className="flex h-screen w-full flex-col overflow-hidden bg-black text-black">
      <TitleBar />
      <Header />
      <div className="flex min-h-0 flex-1">
        <Sidebar />
        <main className="relative min-w-0 flex-1 overflow-hidden">
          <BoardCanvas />
          <Popview />
        </main>
        <ToolPanel />
      </div>
      <CommandRow />
      <StatusRow />
    </div>
  );
}
